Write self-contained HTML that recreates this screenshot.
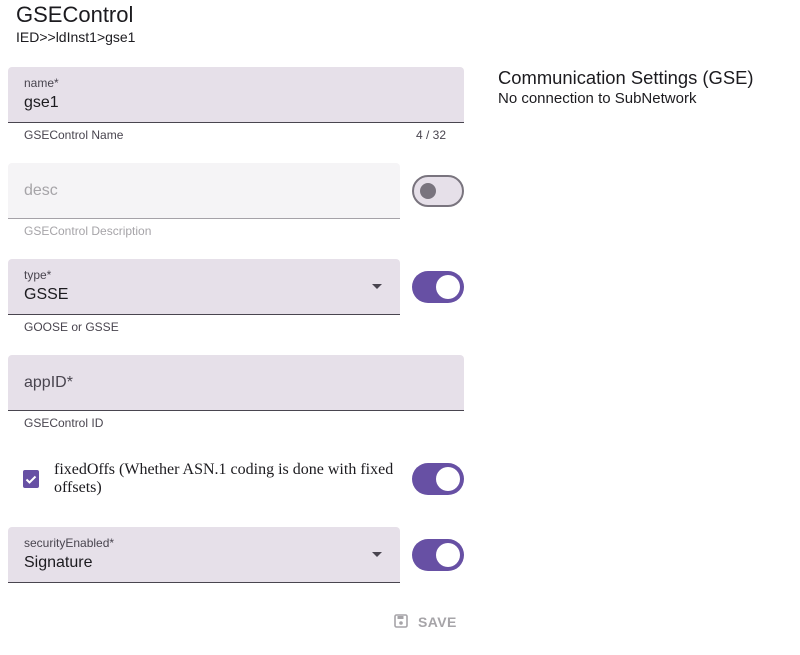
<!DOCTYPE html>
<html><head><meta charset="utf-8"><style>
*{box-sizing:border-box;margin:0;padding:0}
body{width:800px;height:655px;background:#fff;font-family:"Liberation Sans",sans-serif;position:relative;overflow:hidden;color:#1c1b1f}
.a{position:absolute}
.f{position:absolute;left:8px;height:56px;background:#e6e0e9;border-radius:4px 4px 0 0;border-bottom:1px solid #49454f}
.lab{position:absolute;left:16px;top:9px;font-size:12px;color:#49454f}
.val{position:absolute;left:16px;top:27px;font-size:16px;color:#1c1b1f}
.ph{position:absolute;left:16px;top:19px;font-size:16px;color:#49454f}
.help{position:absolute;left:24px;font-size:12px;color:#49454f}
.sw{position:absolute;left:412px;width:52px;height:32px;border-radius:16px;background:#6750a4}
.sw::after{content:"";position:absolute;right:4px;top:4px;width:24px;height:24px;border-radius:50%;background:#fff}
.arr{position:absolute;right:18px;top:25px;width:0;height:0;border-left:5px solid transparent;border-right:5px solid transparent;border-top:5px solid #49454f}
</style></head><body>
<div class="a" style="left:16px;top:2px;font-size:22px;color:#1c1b1f">GSEControl</div>
<div class="a" style="left:16px;top:29px;font-size:14px;color:#1c1b1f">IED&gt;&gt;ldInst1&gt;gse1</div>

<div class="f" style="top:67px;width:456px"><div class="lab">name*</div><div class="val">gse1</div></div>
<div class="help" style="top:128px">GSEControl Name</div>
<div class="a" style="left:416px;top:128px;font-size:12px;color:#49454f">4 / 32</div>

<div class="f" style="top:163px;width:392px;background:#f5f4f6;border-bottom-color:#a5a2a8"><div class="ph" style="color:#a6a4a8">desc</div></div>
<div class="help" style="top:224px;color:#a6a4a8">GSEControl Description</div>
<div class="a" style="left:412px;top:175px;width:52px;height:32px;border-radius:16px;background:#e6e0e9;border:2px solid #79747e"><div class="a" style="left:6px;top:6px;width:16px;height:16px;border-radius:50%;background:#79747e"></div></div>

<div class="f" style="top:259px;width:392px"><div class="lab">type*</div><div class="val">GSSE</div><div class="arr"></div></div>
<div class="help" style="top:320px">GOOSE or GSSE</div>
<div class="sw" style="top:271px"></div>

<div class="f" style="top:355px;width:456px"><div class="ph">appID*</div></div>
<div class="help" style="top:416px">GSEControl ID</div>

<div class="a" style="left:23px;top:470px;width:16px;height:18px;background:#6750a4;border-radius:2px">
<svg width="16" height="18" viewBox="0 0 16 18"><path d="M3.5 9.5l3 3 6-6" stroke="#fff" stroke-width="2" fill="none"/></svg></div>
<div class="a" style="left:54px;top:461px;width:345px;font-family:'Liberation Serif',serif;font-size:16px;line-height:18px;color:#1c1b1f">fixedOffs (Whether ASN.1 coding is done with fixed offsets)</div>
<div class="sw" style="top:463px"></div>

<div class="f" style="top:527px;width:392px"><div class="lab">securityEnabled*</div><div class="val">Signature</div><div class="arr"></div></div>
<div class="sw" style="top:539px"></div>

<svg class="a" style="left:394px;top:614px" width="14" height="14" viewBox="0 0 14 14"><rect x="1" y="1" width="12" height="12" rx="1.5" fill="none" stroke="#a6a4a8" stroke-width="1.6"/><rect x="3.5" y="2" width="6" height="3" fill="#a6a4a8"/><circle cx="7" cy="9" r="1.8" fill="#a6a4a8"/></svg>
<div class="a" style="left:418px;top:614px;font-size:14px;font-weight:bold;letter-spacing:0.4px;color:#a6a4a8">SAVE</div>

<div class="a" style="left:498px;top:67px;font-size:18.4px;color:#1c1b1f">Communication Settings (GSE)</div>
<div class="a" style="left:498px;top:90px;font-size:15px;color:#1c1b1f">No connection to SubNetwork</div>
</body></html>
